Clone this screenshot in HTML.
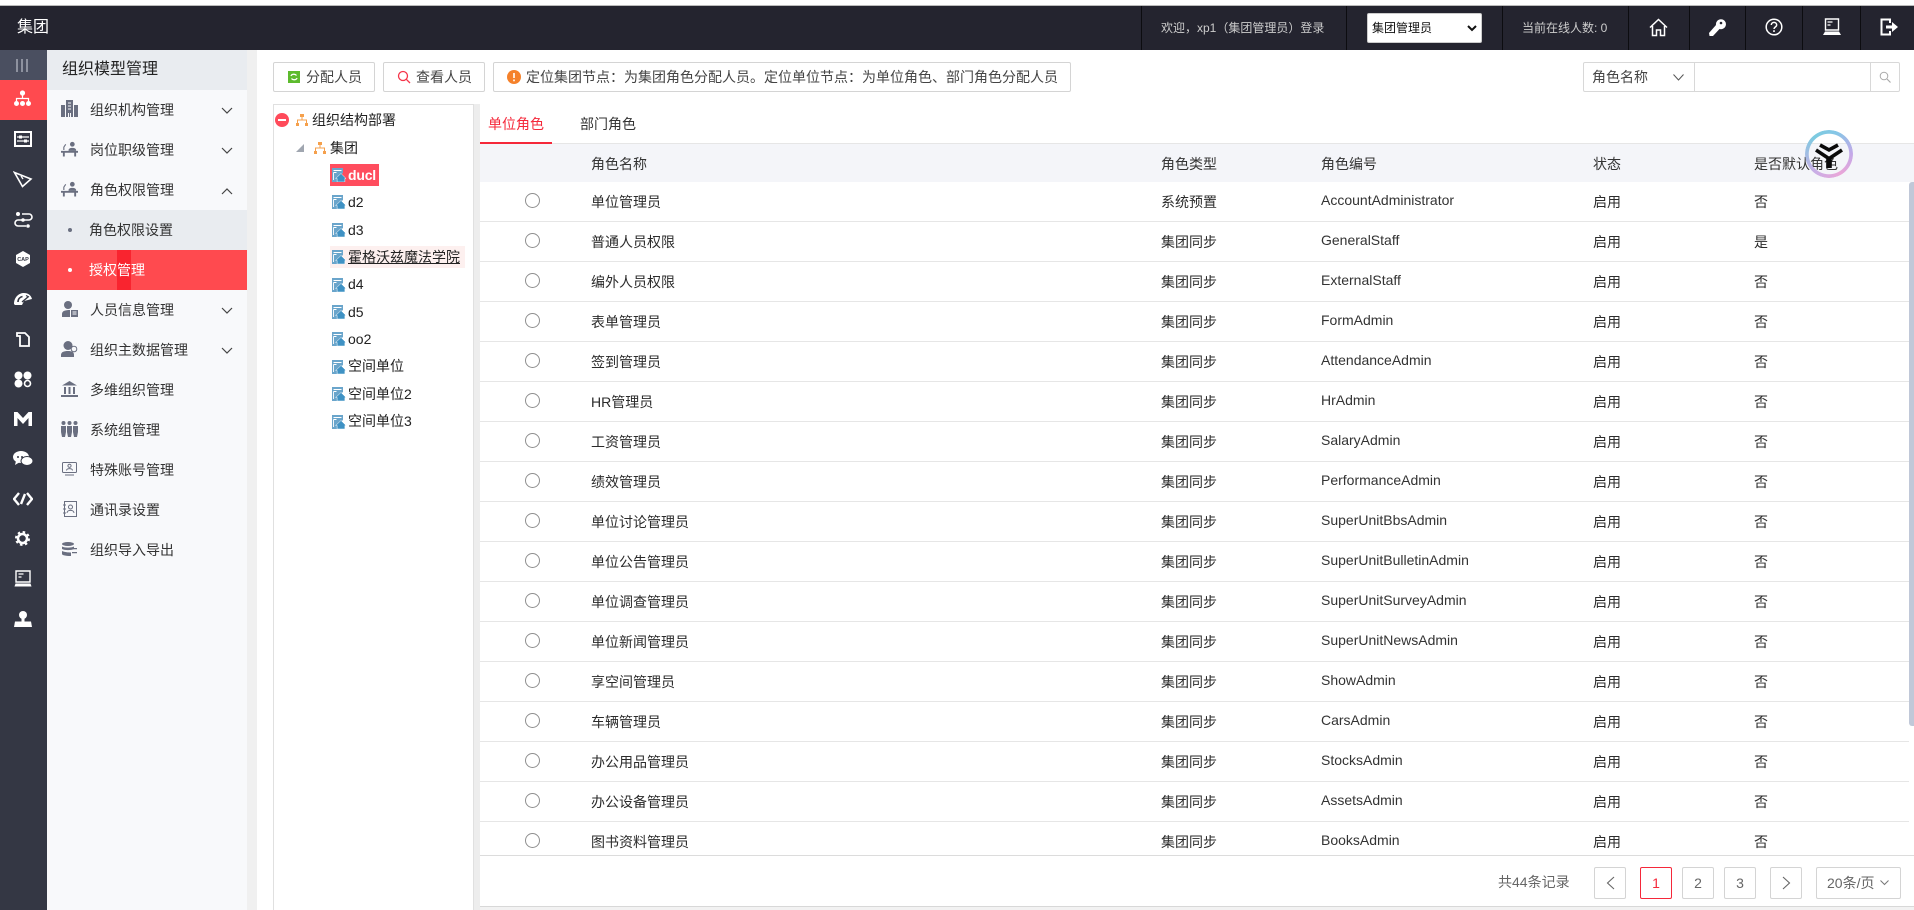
<!DOCTYPE html>
<html lang="zh"><head><meta charset="utf-8"><title>组织模型管理</title>
<style>
*{box-sizing:border-box}
html,body{margin:0;padding:0;width:1914px;height:910px;overflow:hidden;background:#fff}
body{font-family:"Liberation Sans","Noto Sans CJK SC",sans-serif;font-size:14px;color:#333;position:relative}
.a{position:absolute}
.t{position:absolute;white-space:nowrap;line-height:20px}
#top{left:0;top:0;width:1914px;height:6px;background:#fff;border-bottom:1px solid #bbb}
#hd{left:0;top:6px;width:1914px;height:44px;background:#24242f}
.sep{position:absolute;top:6px;width:1px;height:44px;background:#0c0c10}
#rail{left:0;top:50px;width:47px;height:860px;background:#343744}
#tog{left:0;top:50px;width:47px;height:30px;background:#4a4f60}
#act{left:0;top:80px;width:47px;height:40px;background:#ff4a4f}
#menu{left:47px;top:50px;width:200px;height:860px;background:#f8f9fb}
#strip{left:247px;top:50px;width:10px;height:860px;background:#f0f0f0}
.mi{position:absolute;left:90px;color:#333;line-height:20px;white-space:nowrap}
.btn{position:absolute;top:62px;height:30px;border:1px solid #d4d4d4;border-radius:2px;background:#fff;line-height:28px;color:#444;white-space:nowrap}
.tr{position:absolute;left:348px;line-height:20px;color:#222;white-space:nowrap}
.ic{position:absolute}
.row{position:absolute;left:480px;width:1429px;height:40px;border-bottom:1px solid #e6e6e6}
.row i{position:absolute;left:45px;top:11px;width:15px;height:15px;border:1px solid #8f8f8f;border-radius:50%}
.row span{position:absolute;top:10px;line-height:20px;white-space:nowrap;color:#2b2b2b}
.row .n{left:111px}.row .k{left:681px}.row .c{left:841px;top:8px;font-family:"Liberation Sans",sans-serif;color:#333}.row .s{left:1113px}.row .d{left:1274px}
.pg{position:absolute;top:867px;width:32px;height:32px;border:1px solid #d4d4d4;border-radius:2px;text-align:center;line-height:30px;color:#666;background:#fff}
</style></head><body>
<svg width="0" height="0" style="position:absolute"><defs>
<symbol id="org" viewBox="0 0 14 14"><path d="M5 1h4v3H5zM1 10h3v3H1zM10 10h3v3h-3z" fill="#f5a04c"/><path d="M7 4v3M2.500 10V7h9v3" fill="none" stroke="#f5a04c" stroke-width="1"/></symbol>
<symbol id="unit" viewBox="0 0 14 14"><path d="M0 0h11v5L6 9v5H0z" fill="#6aa5cb"/><path d="M1.500 2.500h8M1.500 4.500V12M1.500 4.500h3" stroke="#fff" stroke-width=".9" fill="none"/><path d="M9 5.500L3.600 10.500h1.500V14h7.800v-3.500h1.100z" fill="#3f92c4" stroke="#fff" stroke-width=".5"/></symbol>
<symbol id="desk" viewBox="0 0 18 16"><circle cx="12" cy="3" r="2.500" fill="#6a6f80"/><path d="M8 9c0-3 8-3 8 0v1H8z" fill="#6a6f80"/><path d="M0 10h18v2h-2v4h-2v-4H4v4H2v-4H0z" fill="#6a6f80"/><path d="M3 9V6l2-3" stroke="#6a6f80" stroke-width="1.200" fill="none"/></symbol>
<symbol id="chev" viewBox="0 0 12 8"><path d="M1 1l5 5 5-5" fill="none" stroke="#444" stroke-width="1.200"/></symbol>
</defs></svg>

<div class="a" id="top"></div>
<div class="a" id="hd"></div>
<div class="t" style="left:17px;top:16px;font-size:16px;line-height:24px;color:#fff">集团</div>
<div class="sep" style="left:1141px"></div><div class="sep" style="left:1346px"></div><div class="sep" style="left:1502px"></div><div class="sep" style="left:1628px"></div><div class="sep" style="left:1689px"></div><div class="sep" style="left:1745px"></div><div class="sep" style="left:1802px"></div><div class="sep" style="left:1860px"></div>
<div class="t" style="left:1161px;top:18px;font-size:12px;color:#ccc">欢迎，xp1（集团管理员）登录</div>
<div class="a" style="left:1367px;top:13px;width:115px;height:30px;background:#fff;border:1px solid #ccc;border-radius:2px"></div>
<div class="t" style="left:1372px;top:18px;font-size:12px;color:#111">集团管理员</div>
<svg class="ic" style="left:1467px;top:25px" width="10" height="7" viewBox="0 0 10 7"><path d="M1 1l4 4 4-4" fill="none" stroke="#111" stroke-width="2"/></svg>
<div class="t" style="left:1522px;top:18px;font-size:12px;color:#ccc">当前在线人数: 0</div>
<svg class="ic" style="left:1649px;top:18px" width="19" height="19" viewBox="0 0 19 19"><path d="M1 9.500L9.500 1.500 18 9.500M3.500 8v9.500h4V12h4v5.500h4V8" fill="none" stroke="#fff" stroke-width="1.500"/></svg>
<svg class="ic" style="left:1708px;top:18px" width="18" height="19" viewBox="0 0 18 19"><path d="M8 7a5 5 0 1 1 3.500 4L5 18H1.500l-.5-3z" fill="#fff"/><circle cx="13" cy="5" r="1.300" fill="#24242f"/></svg>
<svg class="ic" style="left:1765px;top:18px" width="18" height="18" viewBox="0 0 18 18"><circle cx="9" cy="9" r="7.800" fill="none" stroke="#fff" stroke-width="1.500"/><path d="M6.300 7c0-3.500 5.400-3.500 5.400 0 0 2-2.700 2-2.700 4" fill="none" stroke="#fff" stroke-width="1.500"/><rect x="8.200" y="12.200" width="1.600" height="1.800" fill="#fff"/></svg>
<svg class="ic" style="left:1823px;top:18px" width="18" height="18" viewBox="0 0 18 18"><path d="M2.500 1h13v11h-13z" fill="none" stroke="#fff" stroke-width="1.400"/><path d="M4.500 4h5M4.500 7h3" stroke="#fff" stroke-width="1.300"/><path d="M2 13.500h14l2 3.500H0z" fill="#fff"/></svg>
<svg class="ic" style="left:1880px;top:18px" width="19" height="18" viewBox="0 0 19 18"><path d="M10 5V1.500H1.500v15H10V13" fill="none" stroke="#fff" stroke-width="2"/><path d="M6 7.500h6V4l6 5-6 5v-3.500H6z" fill="#fff"/></svg>

<div class="a" id="rail"></div><div class="a" id="tog"></div><div class="a" id="act"></div>
<svg class="ic" style="left:16px;top:59px" width="12" height="13" viewBox="0 0 12 13"><path d="M1 0v13M6 0v13M11 0v13" stroke="#a4a8b4" stroke-width="1.500"/></svg>
<svg class="ic" style="left:14px;top:90px" width="17" height="17" viewBox="0 0 17 17"><circle cx="8.500" cy="3" r="2.600" fill="#fff"/><path d="M8.500 5v4M2.500 11V8.500h12V11" fill="none" stroke="#fff" stroke-width="1.200"/><circle cx="2.500" cy="13.500" r="2.500" fill="#fff"/><circle cx="8.500" cy="13.500" r="2.500" fill="#fff"/><circle cx="14.500" cy="13.500" r="2.500" fill="#fff"/></svg>
<svg class="ic" style="left:14px;top:131px" width="18" height="16" viewBox="0 0 18 16"><rect x="1" y="1" width="16" height="14" fill="none" stroke="#fff" stroke-width="2"/><path d="M3 6h12M3 10h12" stroke="#fff" stroke-width="1.300"/><rect x="5" y="4.500" width="3" height="3" fill="#fff"/><rect x="10" y="8.500" width="3" height="3" fill="#fff"/></svg>
<svg class="ic" style="left:13px;top:171px" width="20" height="17" viewBox="0 0 20 17"><path d="M1.500 1.500L18 8 9.500 15.500z" fill="none" stroke="#fff" stroke-width="1.600"/><path d="M8 5l2 3" stroke="#fff" stroke-width="1.300"/></svg>
<svg class="ic" style="left:13px;top:211px" width="20" height="17" viewBox="0 0 20 17"><path d="M9 3h7a3 3 0 0 1 0 6H5a3 3 0 0 0 0 6h8" fill="none" stroke="#fff" stroke-width="1.600"/><circle cx="5" cy="3" r="2" fill="#fff"/><circle cx="10" cy="9" r="1.800" fill="#fff"/><circle cx="15" cy="15" r="1.800" fill="#fff"/></svg>
<svg class="ic" style="left:15px;top:251px" width="16" height="16" viewBox="0 0 16 16"><path d="M8 0l7 4v8l-7 4-7-4V4z" fill="#fff"/><text x="8" y="10" font-size="5.500" font-weight="700" text-anchor="middle" fill="#343744" font-family="Liberation Sans, sans-serif">CAP</text></svg>
<svg class="ic" style="left:13px;top:291px" width="20" height="16" viewBox="0 0 20 16"><path d="M1 13C1 6 6 2 11 2c4 0 7 2 8 6l-8 2-2 4H2z" fill="#fff"/><path d="M5 11C5 8 7 6 9.500 5.500" stroke="#343744" stroke-width="1.600" fill="none"/><path d="M9 11l6-5" stroke="#343744" stroke-width="1.400"/><path d="M13 4.500l3 1.500" stroke="#343744" stroke-width="1.200"/></svg>
<svg class="ic" style="left:16px;top:332px" width="14" height="15" viewBox="0 0 14 15"><path d="M1 1h8l4 4v9H4V4H1z" fill="none" stroke="#fff" stroke-width="1.800"/></svg>
<svg class="ic" style="left:14px;top:371px" width="18" height="17" viewBox="0 0 18 17"><circle cx="4.500" cy="4.500" r="4" fill="#fff"/><circle cx="13.500" cy="4.500" r="4" fill="#fff"/><circle cx="4.500" cy="12.500" r="4" fill="#fff"/><circle cx="13.500" cy="12.500" r="3" fill="none" stroke="#fff" stroke-width="1.600"/></svg>
<svg class="ic" style="left:14px;top:412px" width="18" height="14" viewBox="0 0 18 14"><path d="M0 14V0h3.500L9 6l5.500-6H18v14h-3.500V6L9 12 3.500 6v8z" fill="#fff"/></svg>
<svg class="ic" style="left:13px;top:451px" width="20" height="16" viewBox="0 0 20 16"><ellipse cx="8" cy="6" rx="8" ry="6" fill="#fff"/><path d="M3 10l-1 4 5-3z" fill="#fff"/><ellipse cx="14" cy="10" rx="6" ry="4.500" fill="#fff" stroke="#343744"/><circle cx="5" cy="6" r="1" fill="#343744"/><circle cx="9" cy="6" r="1" fill="#343744"/></svg>
<svg class="ic" style="left:13px;top:492px" width="20" height="14" viewBox="0 0 20 14"><path d="M6 1L1 7l5 6M14 1l5 6-5 6M12 2L8 12" fill="none" stroke="#fff" stroke-width="2.400"/></svg>
<svg class="ic" style="left:15px;top:531px" width="15" height="15" viewBox="0 0 15 15"><circle cx="7.500" cy="7.500" r="4.500" fill="none" stroke="#fff" stroke-width="2.500"/><circle cx="7.500" cy="7.500" r="6.500" fill="none" stroke="#fff" stroke-width="2" stroke-dasharray="2.500 2.600"/></svg>
<svg class="ic" style="left:14px;top:570px" width="18" height="17" viewBox="0 0 18 17"><path d="M2 1h14v11H2z" fill="none" stroke="#fff" stroke-width="1.400"/><path d="M4.500 4h5M4.500 7h3" stroke="#fff" stroke-width="1.300"/><path d="M1.500 13.500h15l1 3H.5z" fill="#fff"/></svg>
<svg class="ic" style="left:14px;top:611px" width="18" height="16" viewBox="0 0 18 16"><circle cx="9" cy="4" r="4" fill="#fff"/><rect x="7.500" y="7" width="3" height="4" fill="#fff"/><path d="M1 10.500h16L18 16H0z" fill="#fff"/></svg>

<div class="a" id="menu"></div><div class="a" id="strip"></div>
<div class="a" style="left:47px;top:50px;width:200px;height:40px;background:#e9ecf0"></div>
<div class="t" style="left:62px;top:58px;font-size:16px;line-height:24px;color:#222">组织模型管理</div>
<div class="a" style="left:47px;top:210px;width:200px;height:40px;background:#e9ecf0"></div>
<div class="a" style="left:47px;top:250px;width:200px;height:40px;background:#ff4a4f"></div>
<div class="a" style="left:117px;top:250px;width:14px;height:40px;background:#f9242f"></div>
<div class="mi" style="top:100px">组织机构管理</div>
<div class="mi" style="top:140px">岗位职级管理</div>
<div class="mi" style="top:180px">角色权限管理</div>
<div class="mi" style="top:220px;left:89px">角色权限设置</div>
<div class="mi" style="top:260px;left:89px;color:#fff">授权管理</div>
<div class="mi" style="top:300px">人员信息管理</div>
<div class="mi" style="top:340px">组织主数据管理</div>
<div class="mi" style="top:380px">多维组织管理</div>
<div class="mi" style="top:420px">系统组管理</div>
<div class="mi" style="top:460px">特殊账号管理</div>
<div class="mi" style="top:500px">通讯录设置</div>
<div class="mi" style="top:540px">组织导入导出</div>
<div class="a" style="left:68px;top:228px;width:4px;height:4px;border-radius:50%;background:#6a6f80"></div>
<div class="a" style="left:68px;top:268px;width:4px;height:4px;border-radius:50%;background:#fff"></div>
<svg class="ic" style="left:221px;top:107px" width="12" height="8"><use href="#chev"/></svg>
<svg class="ic" style="left:221px;top:147px" width="12" height="8"><use href="#chev"/></svg>
<svg class="ic" style="left:221px;top:187px;transform:scaleY(-1)" width="12" height="8"><use href="#chev"/></svg>
<svg class="ic" style="left:221px;top:307px" width="12" height="8"><use href="#chev"/></svg>
<svg class="ic" style="left:221px;top:347px" width="12" height="8"><use href="#chev"/></svg>
<svg class="ic" style="left:61px;top:100px" width="17" height="17" viewBox="0 0 17 17"><path d="M5 0h7v17H5zM0 5h4v12H0zM13 5h4v12h-4z" fill="#6a6f80"/><path d="M7 3h3M7 6h3M7 9h3M7.500 13v4M9.500 13v4" stroke="#f8f9fb"/></svg>
<svg class="ic" style="left:61px;top:141px" width="17" height="16"><use href="#desk"/></svg>
<svg class="ic" style="left:61px;top:181px" width="17" height="16"><use href="#desk"/></svg>
<svg class="ic" style="left:62px;top:301px" width="16" height="16" viewBox="0 0 16 16"><circle cx="6" cy="4" r="4" fill="#6a6f80"/><path d="M0 16v-3c0-3 3-4 8-4v7z" fill="#6a6f80"/><rect x="9" y="9" width="7" height="7" fill="#6a6f80"/><path d="M10.500 11h4M10.500 13h4" stroke="#f8f9fb"/></svg>
<svg class="ic" style="left:61px;top:341px" width="17" height="16" viewBox="0 0 17 16"><circle cx="7" cy="4.500" r="4.500" fill="#6a6f80"/><path d="M0 16v-2c0-3 3-4 7-4s6 1 6 4v2z" fill="#6a6f80"/><circle cx="13" cy="8" r="2.800" fill="#f8f9fb" stroke="#6a6f80"/></svg>
<svg class="ic" style="left:61px;top:381px" width="17" height="16" viewBox="0 0 17 16"><path d="M8.500 0L16 4.500H1z" fill="#6a6f80"/><path d="M3 6h2v7H3zM7.500 6h2v7h-2zM12 6h2v7h-2zM0 14h17v2H0z" fill="#6a6f80"/></svg>
<svg class="ic" style="left:61px;top:421px" width="17" height="16" viewBox="0 0 17 16"><g fill="#6a6f80"><circle cx="2.500" cy="2" r="2"/><circle cx="8.500" cy="2" r="2"/><circle cx="14.500" cy="2" r="2"/><path d="M0 5h5v6l-1 5H1l-1-5zM6 5h5v6l-1 5H7l-1-5zM12 5h5v6l-1 5h-3l-1-5z"/></g></svg>
<svg class="ic" style="left:62px;top:462px" width="15" height="14" viewBox="0 0 15 14"><rect x=".5" y=".5" width="14" height="10" rx="1" fill="none" stroke="#6a6f80"/><circle cx="7.500" cy="3.800" r="1.600" fill="none" stroke="#6a6f80"/><path d="M4.500 8.500c0-2.500 6-2.500 6 0M3 13h9" fill="none" stroke="#6a6f80"/></svg>
<svg class="ic" style="left:62px;top:501px" width="15" height="16" viewBox="0 0 15 16"><rect x="2.500" y=".5" width="12" height="15" fill="none" stroke="#6a6f80"/><circle cx="8.500" cy="6" r="2" fill="none" stroke="#6a6f80"/><path d="M5 12c0-3.500 7-3.500 7 0M1 4h3M1 8h3M1 12h3" fill="none" stroke="#6a6f80"/></svg>
<svg class="ic" style="left:62px;top:542px" width="15" height="14" viewBox="0 0 15 14"><g fill="#6a6f80"><ellipse cx="6" cy="2" rx="6" ry="2"/><path d="M0 4.500c3 1.500 9 1.500 12 0V7c-3 1.500-9 1.500-12 0zM0 9c3 1.500 9 1.500 9 1.500V14c-6 0-9-1-9-2z"/><path d="M9 6h6v1.200H9zM10 10h5v1.200h-5z"/></g></svg>

<div class="btn" style="left:273px;width:102px;padding-left:32px">分配人员</div>
<svg class="ic" style="left:288px;top:71px" width="12" height="12" viewBox="0 0 12 12"><rect width="12" height="12" fill="#5dbb2e"/><path d="M3 5c.5-2 4-2.500 5.500-.5M9 7c-.5 2-4 2.500-5.500.5" fill="none" stroke="#fff" stroke-width="1.200"/></svg>
<div class="btn" style="left:383px;width:102px;padding-left:32px">查看人员</div>
<svg class="ic" style="left:397px;top:70px" width="14" height="14" viewBox="0 0 14 14"><circle cx="6" cy="6" r="4.500" fill="none" stroke="#f5354a" stroke-width="1.300"/><path d="M9.300 9.300L13 13" stroke="#f5354a" stroke-width="1.300"/></svg>
<div class="btn" style="left:493px;width:578px;padding-left:32px">定位集团节点：为集团角色分配人员。定位单位节点：为单位角色、部门角色分配人员</div>
<svg class="ic" style="left:507px;top:70px" width="14" height="14" viewBox="0 0 14 14"><circle cx="7" cy="7" r="7" fill="#f5812a"/><path d="M7 3v5M7 9.500v1.800" stroke="#fff" stroke-width="1.600"/></svg>

<div class="a" style="left:1583px;top:62px;width:317px;height:30px;border:1px solid #d8d8d8;border-radius:2px"></div>
<div class="a" style="left:1694px;top:62px;width:1px;height:30px;background:#d8d8d8"></div>
<div class="a" style="left:1870px;top:62px;width:1px;height:30px;background:#d8d8d8"></div>
<div class="t" style="left:1592px;top:67px;color:#444">角色名称</div>
<svg class="ic" style="left:1673px;top:74px" width="11" height="7" viewBox="0 0 11 7"><path d="M.5.5l5 5.500 5-5.500" fill="none" stroke="#555"/></svg>
<svg class="ic" style="left:1879px;top:71px" width="12" height="12" viewBox="0 0 12 12"><circle cx="5" cy="5" r="3.800" fill="none" stroke="#aaa"/><path d="M8 8l3.500 3.500" stroke="#aaa" stroke-width="1.200"/></svg>

<div class="a" style="left:273px;top:104px;width:201px;height:806px;border:1px solid #e0e0e0;border-bottom:0"></div>
<div class="a" style="left:474px;top:104px;width:6px;height:806px;background:#ededed"></div>
<svg class="ic" style="left:275px;top:113px" width="14" height="14" viewBox="0 0 14 14"><circle cx="7" cy="7" r="7" fill="#ff4a5a"/><rect x="3" y="6" width="8" height="2" fill="#fff"/></svg>
<svg class="ic" style="left:295px;top:113px" width="14" height="14"><use href="#org"/></svg>
<div class="tr" style="top:110px;left:312px">组织结构部署</div>
<svg class="ic" style="left:296px;top:144px" width="8" height="8" viewBox="0 0 8 8"><path d="M8 0v8H0z" fill="#a0a6b0"/></svg>
<svg class="ic" style="left:313px;top:141px" width="14" height="14"><use href="#org"/></svg>
<div class="tr" style="top:138px;left:330px">集团</div>
<div class="a" style="left:330px;top:164px;width:49px;height:22px;background:#ff4d5e"></div>
<div class="a" style="left:330px;top:246px;width:135px;height:22px;background:#fdf0ef"></div>
<div class="tr" style="top:165px;color:#fff;font-weight:700;letter-spacing:-.2px">ducl</div>
<div class="tr" style="top:192px">d2</div>
<div class="tr" style="top:220px">d3</div>
<div class="tr" style="top:247px;text-decoration:underline">霍格沃兹魔法学院</div>
<div class="tr" style="top:274px">d4</div>
<div class="tr" style="top:302px">d5</div>
<div class="tr" style="top:329px">oo2</div>
<div class="tr" style="top:356px">空间单位</div>
<div class="tr" style="top:384px">空间单位2</div>
<div class="tr" style="top:411px">空间单位3</div>
<svg class="ic" style="left:332px;top:168px" width="14" height="14"><use href="#unit"/></svg>
<svg class="ic" style="left:332px;top:195px" width="14" height="14"><use href="#unit"/></svg>
<svg class="ic" style="left:332px;top:223px" width="14" height="14"><use href="#unit"/></svg>
<svg class="ic" style="left:332px;top:250px" width="14" height="14"><use href="#unit"/></svg>
<svg class="ic" style="left:332px;top:278px" width="14" height="14"><use href="#unit"/></svg>
<svg class="ic" style="left:332px;top:305px" width="14" height="14"><use href="#unit"/></svg>
<svg class="ic" style="left:332px;top:332px" width="14" height="14"><use href="#unit"/></svg>
<svg class="ic" style="left:332px;top:360px" width="14" height="14"><use href="#unit"/></svg>
<svg class="ic" style="left:332px;top:387px" width="14" height="14"><use href="#unit"/></svg>
<svg class="ic" style="left:332px;top:415px" width="14" height="14"><use href="#unit"/></svg>

<div class="t" style="left:488px;top:114px;color:#f5283a">单位角色</div>
<div class="t" style="left:580px;top:114px;color:#333">部门角色</div>
<div class="a" style="left:480px;top:142px;width:72px;height:2px;background:#f5283a"></div>
<div class="a" style="left:552px;top:143px;width:1362px;height:1px;background:#e6e6e6"></div>
<div class="a" style="left:480px;top:144px;width:1434px;height:38px;background:#f4f5f9"></div>
<div class="t" style="left:591px;top:154px">角色名称</div>
<div class="t" style="left:1161px;top:154px">角色类型</div>
<div class="t" style="left:1321px;top:154px">角色编号</div>
<div class="t" style="left:1593px;top:154px">状态</div>
<div class="t" style="left:1754px;top:154px">是否默认角色</div>

<div class="row" style="top:182px"><i></i><span class="n">单位管理员</span><span class="k">系统预置</span><span class="c">AccountAdministrator</span><span class="s">启用</span><span class="d">否</span></div>
<div class="row" style="top:222px"><i></i><span class="n">普通人员权限</span><span class="k">集团同步</span><span class="c">GeneralStaff</span><span class="s">启用</span><span class="d">是</span></div>
<div class="row" style="top:262px"><i></i><span class="n">编外人员权限</span><span class="k">集团同步</span><span class="c">ExternalStaff</span><span class="s">启用</span><span class="d">否</span></div>
<div class="row" style="top:302px"><i></i><span class="n">表单管理员</span><span class="k">集团同步</span><span class="c">FormAdmin</span><span class="s">启用</span><span class="d">否</span></div>
<div class="row" style="top:342px"><i></i><span class="n">签到管理员</span><span class="k">集团同步</span><span class="c">AttendanceAdmin</span><span class="s">启用</span><span class="d">否</span></div>
<div class="row" style="top:382px"><i></i><span class="n">HR管理员</span><span class="k">集团同步</span><span class="c">HrAdmin</span><span class="s">启用</span><span class="d">否</span></div>
<div class="row" style="top:422px"><i></i><span class="n">工资管理员</span><span class="k">集团同步</span><span class="c">SalaryAdmin</span><span class="s">启用</span><span class="d">否</span></div>
<div class="row" style="top:462px"><i></i><span class="n">绩效管理员</span><span class="k">集团同步</span><span class="c">PerformanceAdmin</span><span class="s">启用</span><span class="d">否</span></div>
<div class="row" style="top:502px"><i></i><span class="n">单位讨论管理员</span><span class="k">集团同步</span><span class="c">SuperUnitBbsAdmin</span><span class="s">启用</span><span class="d">否</span></div>
<div class="row" style="top:542px"><i></i><span class="n">单位公告管理员</span><span class="k">集团同步</span><span class="c">SuperUnitBulletinAdmin</span><span class="s">启用</span><span class="d">否</span></div>
<div class="row" style="top:582px"><i></i><span class="n">单位调查管理员</span><span class="k">集团同步</span><span class="c">SuperUnitSurveyAdmin</span><span class="s">启用</span><span class="d">否</span></div>
<div class="row" style="top:622px"><i></i><span class="n">单位新闻管理员</span><span class="k">集团同步</span><span class="c">SuperUnitNewsAdmin</span><span class="s">启用</span><span class="d">否</span></div>
<div class="row" style="top:662px"><i></i><span class="n">享空间管理员</span><span class="k">集团同步</span><span class="c">ShowAdmin</span><span class="s">启用</span><span class="d">否</span></div>
<div class="row" style="top:702px"><i></i><span class="n">车辆管理员</span><span class="k">集团同步</span><span class="c">CarsAdmin</span><span class="s">启用</span><span class="d">否</span></div>
<div class="row" style="top:742px"><i></i><span class="n">办公用品管理员</span><span class="k">集团同步</span><span class="c">StocksAdmin</span><span class="s">启用</span><span class="d">否</span></div>
<div class="row" style="top:782px"><i></i><span class="n">办公设备管理员</span><span class="k">集团同步</span><span class="c">AssetsAdmin</span><span class="s">启用</span><span class="d">否</span></div>
<div class="row" style="top:822px;height:33px;border-bottom:0"><i></i><span class="n">图书资料管理员</span><span class="k">集团同步</span><span class="c">BooksAdmin</span><span class="s">启用</span><span class="d">否</span></div>

<div class="a" style="left:1909px;top:182px;width:5px;height:544px;background:#c0c8d8;border-radius:3px 0 0 3px"></div>
<div class="a" style="left:480px;top:855px;width:1434px;height:1px;background:#dcdcdc"></div>
<div class="t" style="left:1498px;top:872px;color:#666">共44条记录</div>
<div class="pg" style="left:1594px"><svg width="9" height="14" viewBox="0 0 9 14" style="margin-top:8px"><path d="M8 1L1.500 7 8 13" fill="none" stroke="#666" stroke-width="1.100"/></svg></div>
<div class="pg" style="left:1640px;border-color:#f5283a;color:#f5283a">1</div>
<div class="pg" style="left:1682px">2</div>
<div class="pg" style="left:1724px">3</div>
<div class="pg" style="left:1770px"><svg width="9" height="14" viewBox="0 0 9 14" style="margin-top:8px"><path d="M1 1l6.500 6L1 13" fill="none" stroke="#666" stroke-width="1.100"/></svg></div>
<div class="pg" style="left:1816px;width:85px;text-align:left;padding-left:10px">20条/页</div>
<svg class="ic" style="left:1880px;top:880px" width="9" height="6" viewBox="0 0 9 6"><path d="M.5.5l4 4 4-4" fill="none" stroke="#777"/></svg>
<div class="a" style="left:480px;top:906px;width:1434px;height:4px;background:#f2f2f2;border-top:1px solid #d8d8d8"></div>

<div class="a" style="left:1805px;top:130px;width:48px;height:48px;border-radius:50%;background:conic-gradient(from 320deg,#7ccbe0,#86c6e6 60deg,#c4a8e8 130deg,#eaa6d8 190deg,#c8aee6 260deg,#7ccbe0);-webkit-mask:radial-gradient(circle,transparent 20px,#000 20.500px)"></div>
<svg class="ic" style="left:1814px;top:142px" width="30" height="28" viewBox="0 0 30 28"><path d="M6 3l9 5 9-5" fill="none" stroke="#0a0a0a" stroke-width="3.600"/><path d="M2 8l12 8v10M28 8l-12 8v10" fill="none" stroke="#0a0a0a" stroke-width="3.600"/></svg>
</body></html>
